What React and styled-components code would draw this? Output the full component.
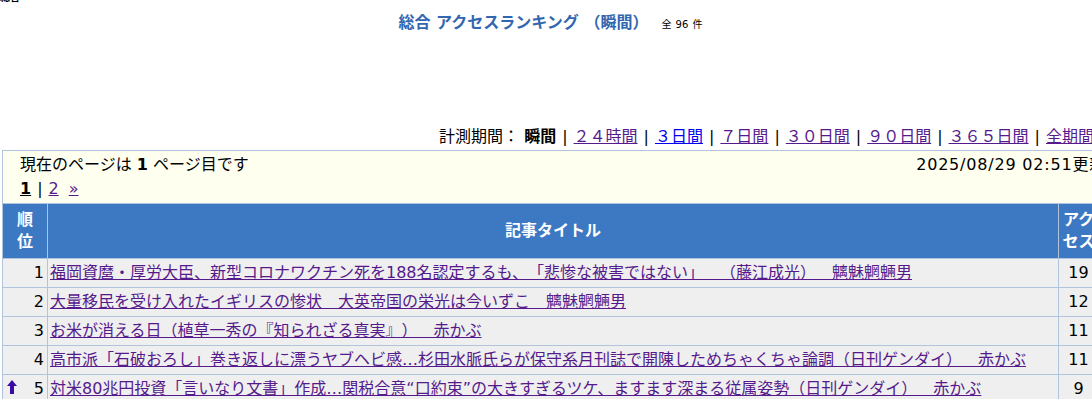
import styled, { createGlobalStyle } from "styled-components";

const GlobalStyle = createGlobalStyle`
  html { overflow: hidden; }
  body {
    margin: 0;
    background: #fff;
    color: #000;
    font-family: "DejaVu Sans", "Noto Sans CJK JP", sans-serif;
    font-size: 16px;
    text-spacing-trim: space-all;
  }
`;

const Crumb = styled.div`
  margin-top: -8px;
  height: 12px;
  font-size: 10px;
  line-height: 12px;
  font-weight: bold;
`;

const Page = styled.div`
  width: 1097px;
  padding: 0 2px;
`;

const TitleBar = styled.h1`
  margin: 9px 0 0;
  font-size: 16px;
  line-height: 20px;
  font-weight: bold;
  text-align: center;
  color: #3366b0;
`;

const Count = styled.span`
  margin-left: 13px;
  font-size: 10px;
  font-weight: normal;
  color: #000;
  word-spacing: 1px;
`;

const AdSpace = styled.div`
  height: 92px;
`;

const PeriodBar = styled.div`
  padding-right: 5px;
  margin-bottom: 3px;
  text-align: right;
  font-size: 16px;
  line-height: 20px;
  white-space: nowrap;
`;

const Sep = styled.span`
  margin: 0 6px;
`;

const PeriodLink = styled.a`
  color: ${(p) => (p.$fresh ? "#0000ee" : "#551a8b")};
  text-decoration: underline;
`;

const InfoBox = styled.div`
  border: 1px solid #b0c4de;
  border-bottom: none;
  background: #fffff0;
  padding: 3px 0 3px 17px;
`;

const InfoRow = styled.div`
  display: flex;
  justify-content: space-between;
  line-height: 22px;
`;

const DateStamp = styled.span`
  margin-right: -8px;
  white-space: nowrap;
  letter-spacing: 0.8px;
`;

const Pager = styled.div`
  margin-top: 2px;
  line-height: 22px;
`;

const CurrentPage = styled.b`
  text-decoration: underline;
`;

const PageSep = styled.span`
  margin: 0 6px;
`;

const PageLink = styled.a`
  color: #551a8b;
  text-decoration: underline;
  margin-right: 10px;
`;

const RankTable = styled.table`
  width: 1097px;
  border-collapse: collapse;
  table-layout: fixed;
  border: 1px solid #b0c4de;
`;

const Col = styled.col`
  width: ${(p) => p.$w || "auto"};
`;

const HeadCell = styled.th`
  background: #3d78c3;
  color: #fff;
  font-weight: bold;
  line-height: 22px;
  padding: 5px 2px;
  border: 1px solid #b0c4de;
  text-align: center;
  vertical-align: middle;
`;

const Cell = styled.td`
  background: #efefef;
  border: 1px solid #b0c4de;
  line-height: 22px;
  padding: 3px 2px;
  text-align: ${(p) => p.$align || "left"};
  white-space: nowrap;
  overflow: hidden;
`;

const RankInner = styled.div`
  display: flex;
  align-items: center;
  justify-content: space-between;
  padding: 0 1px 0 2px;
`;

const TitleLink = styled.a`
  color: #551a8b;
  text-decoration: underline;
`;

const UpArrow = () => (
  <svg width="10" height="14" viewBox="0 0 10 14">
    <polygon points="5,0 10,6 7,6 7,14 3,14 3,6 0,6" fill="#3a0ca3" />
  </svg>
);

const rows = [
  {
    rank: 1,
    title:
      "福岡資麿・厚労大臣、新型コロナワクチン死を188名認定するも、「悲惨な被害ではない」　（藤江成光）　魑魅魍魎男",
    count: 19,
  },
  {
    rank: 2,
    title: "大量移民を受け入れたイギリスの惨状　大英帝国の栄光は今いずこ　魑魅魍魎男",
    count: 12,
  },
  {
    rank: 3,
    title: "お米が消える日（植草一秀の『知られざる真実』）　赤かぶ",
    count: 11,
  },
  {
    rank: 4,
    title:
      "高市派「石破おろし」巻き返しに漂うヤブヘビ感…杉田水脈氏らが保守系月刊誌で開陳しためちゃくちゃ論調（日刊ゲンダイ）　赤かぶ",
    count: 11,
  },
  {
    rank: 5,
    title:
      "対米80兆円投資「言いなり文書」作成…関税合意“口約束”の大きすぎるツケ、ますます深まる従属姿勢（日刊ゲンダイ）　赤かぶ",
    count: 9,
    up: true,
  },
];

const periods = [
  { label: "２４時間" },
  { label: "３日間", fresh: true },
  { label: "７日間" },
  { label: "３０日間" },
  { label: "９０日間" },
  { label: "３６５日間" },
  { label: "全期間" },
];

export default function App() {
  return (
    <>
      <GlobalStyle />
      <Crumb>総合</Crumb>
      <Page>
        <TitleBar>
          総合 アクセスランキング （瞬間）<Count>全 96 件</Count>
        </TitleBar>
        <AdSpace />
        <PeriodBar>
          計測期間： <b>瞬間</b>
          {periods.map((p) => (
            <span key={p.label}>
              <Sep>|</Sep>
              <PeriodLink href="#" $fresh={p.fresh}>
                {p.label}
              </PeriodLink>
            </span>
          ))}
        </PeriodBar>
        <InfoBox>
          <InfoRow>
            <span>
              現在のページは <b>1</b> ページ目です
            </span>
            <DateStamp>2025/08/29 02:51更新</DateStamp>
          </InfoRow>
          <Pager>
            <CurrentPage>1</CurrentPage>
            <PageSep>|</PageSep>
            <PageLink href="#">2</PageLink>
            <PageLink href="#">»</PageLink>
          </Pager>
        </InfoBox>
        <RankTable>
          <colgroup>
            <Col $w="45px" />
            <Col />
            <Col $w="40px" />
          </colgroup>
          <thead>
            <tr>
              <HeadCell>
                順<br />位
              </HeadCell>
              <HeadCell>記事タイトル</HeadCell>
              <HeadCell>アクセス</HeadCell>
            </tr>
          </thead>
          <tbody>
            {rows.map((r) => (
              <tr key={r.rank}>
                <Cell>
                  <RankInner>
                    <span>{r.up && <UpArrow />}</span>
                    <span>{r.rank}</span>
                  </RankInner>
                </Cell>
                <Cell>
                  <TitleLink href="#">{r.title}</TitleLink>
                </Cell>
                <Cell $align="center">{r.count}</Cell>
              </tr>
            ))}
          </tbody>
        </RankTable>
      </Page>
    </>
  );
}
